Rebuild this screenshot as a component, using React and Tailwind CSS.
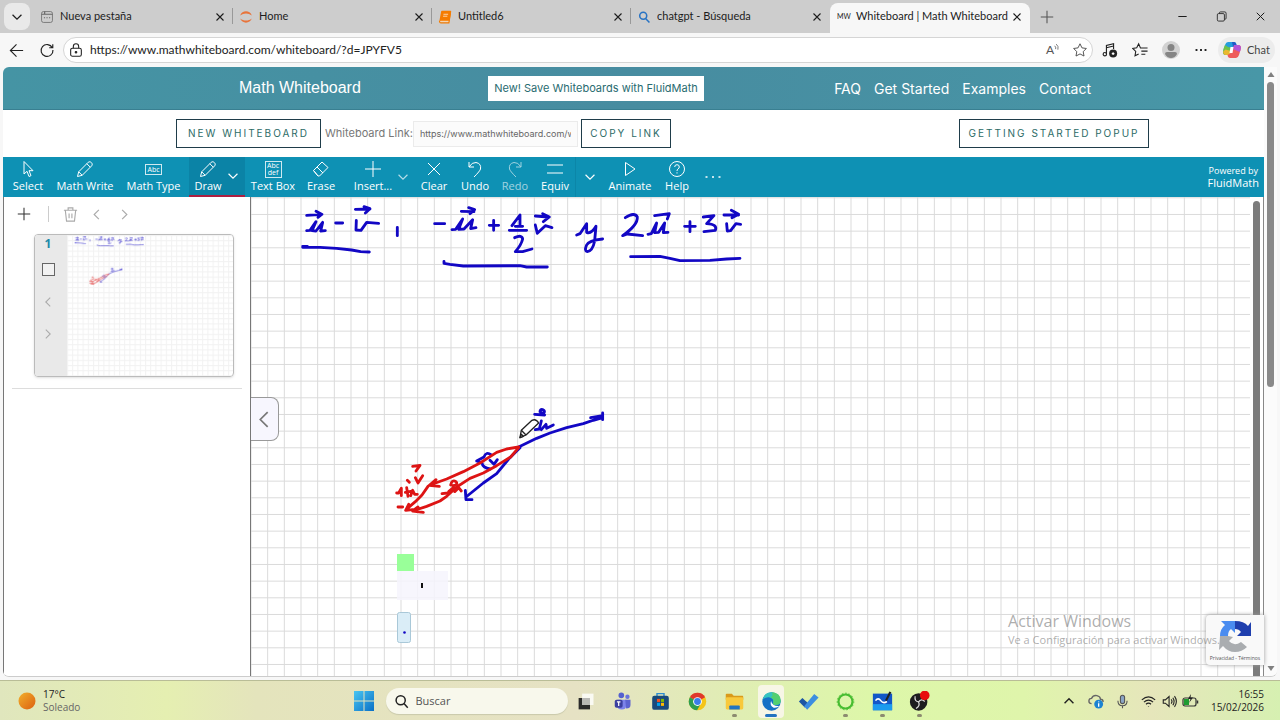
import React from "react";

const INK_BLUE = "#1207c4";
const INK_RED = "#dd1414";

function Glyph({ d, size = 18, width = 1, className = "", children }) {
  return (
    <svg
      width={size}
      height={size}
      viewBox="0 0 18 18"
      fill="none"
      stroke="currentColor"
      strokeWidth={width}
      className={className}
      aria-hidden="true"
    >
      {d && <path d={d} />}
      {children}
    </svg>
  );
}

const CLOSE = "M4.5 4.5 13.5 13.5 M13.5 4.5 4.5 13.5";
const LEFT = "M11.5 4 6.5 9 11.5 14";
const RIGHT = "M6.5 4 11.5 9 6.5 14";
const DOWN = "M4 6.5 9 11.5 14 6.5";
const PENCIL = "M1.5 16.5 2.7 11.8 12.2 2.3C14.2 .5 17.5 3.7 15.7 5.8L6.2 15.3ZM10.8 3.7 14.3 7.2M2.7 11.8 6.2 15.3";

/* ---------- Browser chrome ---------- */

const tabs = [
  {
    title: "Nueva pestaña",
    icon: (
      <Glyph size={14} className="text-[#666]">
        <rect x="2" y="2" width="14" height="14" rx="2.5" />
        <path d="M2 5.5H16M6 2V5.5M5 10h1.5M8.3 10h1.5M11.6 10h1.5" strokeWidth="1.5" />
      </Glyph>
    ),
  },
  {
    title: "Home",
    icon: (
      <Glyph size={14} className="text-[#e8743b]">
        <path d="M1.5 7C4 0 14 0 16.500 7 12 3.500 6 3.500 1.500 7ZM1.500 11C4 18 14 18 16.500 11 12 14.500 6 14.500 1.500 11Z" fill="currentColor" stroke="none" />
      </Glyph>
    ),
  },
  {
    title: "Untitled6",
    icon: (
      <svg width="14" height="14" viewBox="0 0 18 18" aria-hidden="true">
        <path d="M5 2H16L14 13H3Z" fill="#f57c00" stroke="#f57c00" strokeWidth="2" strokeLinejoin="round" />
        <path d="M3 14.500H14M7 5.500H13M6.500 8H12" stroke="#ffd9b0" strokeWidth="1.200" />
        <path d="M2 13.500Q1.500 16.500 4 16.500H14L16 4" fill="none" stroke="#f57c00" strokeWidth="1.500" />
      </svg>
    ),
  },
  {
    title: "chatgpt - Búsqueda",
    icon: (
      <Glyph size={14} width={2} className="text-[#2773c4]">
        <circle cx="8" cy="7.500" r="4.500" />
        <path d="M11 11 16 16" />
      </Glyph>
    ),
  },
];

function TabStrip() {
  return (
    <div className="flex h-[33px] shrink-0 items-stretch bg-[#cdcdcd] font-[Lato,sans-serif] text-[#1c1c1c]">
      <button aria-label="Tab actions" className="ml-1 mt-[3px] flex h-[27px] w-[26px] shrink-0 items-center justify-center rounded-lg bg-[#e9e9e9]">
        <Glyph d={DOWN} size={16} width={1.4} />
      </button>
      <div className="ml-1 flex min-w-0 flex-1">
        {tabs.map((t, i) => (
          <div key={t.title} className="relative flex w-[199px] items-center pl-[6px] pr-[6px]">
            {i < 3 && <span className="absolute right-0 top-2 h-4 w-px bg-[#999]" />}
            {t.icon}
            <span className="ml-[6px] min-w-0 flex-1 truncate text-[11px]">{t.title}</span>
            <button aria-label={"Close " + t.title}>
              <Glyph d={CLOSE} size={14} width={1.4} />
            </button>
          </div>
        ))}
        <div className="mt-[3px] flex w-[200px] items-center rounded-t-lg bg-[#f7f7f7] pb-[3px] pl-[7px] pr-[6px]">
          <span className="w-[13px] text-[7px]">MW</span>
          <span className="ml-[6px] min-w-0 flex-1 whitespace-nowrap text-[11px]">Whiteboard | Math Whiteboard</span>
          <button aria-label="Close Whiteboard">
            <Glyph d={CLOSE} size={14} width={1.4} />
          </button>
        </div>
        <button aria-label="New tab" className="ml-[9px] text-[#555]">
          <Glyph d="M9 2V16M2 9H16" size={16} width={1.200} />
        </button>
      </div>
      <div className="flex items-center gap-6 pr-3">
        <button aria-label="Minimize"><Glyph d="M4 9H14" size={15} width={1.200} /></button>
        <button aria-label="Restore">
          <Glyph size={15}>
            <rect x="4" y="5.500" width="8.500" height="9" rx="1.500" />
            <path d="M6.500 5.500V4.500Q6.500 3.500 8 3.500H13Q14.500 3.500 14.500 5V11Q14.500 12.500 12.500 12.500" />
          </Glyph>
        </button>
        <button aria-label="Close window"><Glyph d={CLOSE} size={15} width={1.200} /></button>
      </div>
    </div>
  );
}

function AddressBar() {
  return (
    <div className="flex h-[34px] shrink-0 items-center bg-[#f7f7f7] font-[Lato,sans-serif] text-[#222]">
      <button aria-label="Back" className="ml-2"><Glyph d="M9 2.500 2.500 9 9 15.500M2.500 9H16" size={17} width={1.200} /></button>
      <button aria-label="Refresh" className="ml-[14px]">
        <Glyph d="M15 6.500A6.700 6.700 0 1 0 15.700 9M15.500 2.500V6.500H11.500" size={16} width={1.300} />
      </button>
      <div className="ml-2 flex h-[26px] min-w-0 flex-1 items-center rounded-full border border-[#d5d5d5] bg-white pl-1 pr-1">
        <Glyph size={16} width={1.200}>
          <rect x="3" y="7" width="12" height="9" rx="2" />
          <path d="M6 7V5Q6 2 9 2T12 5V7" />
          <circle cx="9" cy="11.500" r=".9" fill="currentColor" />
        </Glyph>
        <input
          aria-label="Address"
          readOnly
          value="https://www.mathwhiteboard.com/whiteboard/?d=JPYFV5"
          className="ml-[6px] min-w-0 flex-1 bg-transparent text-[12px] outline-none"
        />
        <button aria-label="Read aloud" className="mr-1 flex text-[12px] text-[#555]">
          A
          <Glyph size={10} width={1.400} className="mt-[2px]" d="M1 5Q4 7 3 11M4 2Q9 6 7 12" />
        </button>
        <button aria-label="Add to favorites" className="ml-1 text-[#444]">
          <Glyph size={16} d="M9 2 11.200 6.600 16.200 7.300 12.600 10.800 13.500 15.800 9 13.400 4.500 15.800 5.400 10.800 1.800 7.300 6.800 6.600Z" />
        </button>
      </div>
      <div className="ml-[9px] flex items-center gap-[14px]">
        <button aria-label="Media">
          <Glyph size={16} width={1.300}>
            <path d="M5 13.500V4L13 2V8M5 6.500 13 4.500" />
            <circle cx="3.200" cy="13.700" r="1.900" />
            <circle cx="12.500" cy="13" r="4.500" fill="currentColor" stroke="none" />
            <path d="M11 13h3M12.500 11.500v3" stroke="white" />
          </Glyph>
        </button>
        <button aria-label="Favorites">
          <Glyph size={16} width={1.200} d="M12 6.700 9.500 6.600 7.500 2 5.300 6.500.8 7.200 4.200 10.600 3.400 15.500 7.500 13.400M10.500 6.800H17.500M10.500 10.300H17.500M10.500 13.800H15" />
        </button>
        <button aria-label="Profile">
          <svg width="18" height="18" viewBox="0 0 18 18" aria-hidden="true">
            <circle cx="9" cy="9" r="9" fill="#d2d2d2" />
            <circle cx="9" cy="6.500" r="3.500" fill="#858585" />
            <path d="M3 13Q3 11 5 11H13Q15 11 15 13Q13 17 9 17T3 13Z" fill="#858585" />
          </svg>
        </button>
        <button aria-label="Settings and more">
          <Glyph size={14} d="M2 9h2.400M7.800 9h2.400M13.600 9H16" width={2.400} />
        </button>
      </div>
      <button className="ml-[10px] mr-[5px] flex h-[26px] w-[57px] items-center gap-[5px] rounded-full bg-[#ececec] pl-1 text-[11px] text-[#444]">
        <svg width="20" height="20" viewBox="0 0 20 20" aria-hidden="true">
          <path d="M6 2H12Q14 2 14.500 5L15 7H11L8 15H4Q0 15 1.500 10L3 5Q4 2 6 2Z" fill="#249ddd" />
          <path d="M3 5Q1 9 1 12T4 15H8L10 8 6 7Z" fill="#6dc24b" />
          <path d="M3.500 9.500 1.200 11.500Q1 15 4 15H8L9 11Z" fill="#e9b92f" />
          <path d="M14 18H8Q6 18 5.500 15L9 13 12 5H16Q20 5 18.500 10L17 15Q16 18 14 18Z" fill="#ee5b5b" />
          <path d="M12 5H16Q20 5 18.500 10L17.800 12 11 9Z" fill="#b254d8" />
          <path d="M10 2H12Q14 2 14.500 5L12 5 11 7Z" fill="#2259c7" />
          <path d="M8.500 7H11.500L10.500 13H7.500Z" fill="#fff" />
        </svg>
        <span>Chat</span>
      </button>
    </div>
  );
}

/* ---------- Site header ---------- */

function SiteHeader() {
  return (
    <header className="flex h-[43px] shrink-0 items-center rounded-tl-md border-b border-[#397f91] bg-linear-to-r from-[#4594a4] via-[#478ca0] to-[#4897a7] text-white">
      <h1 className="ml-[236px] w-[125px] whitespace-nowrap font-['Liberation_Sans',sans-serif] text-[16px]">Math Whiteboard</h1>
      <a href="#save" className="ml-[124px] flex h-[25px] w-[216px] items-center justify-center whitespace-nowrap bg-white font-[Inter,sans-serif] text-[11px] text-[#286b70]">
        New! Save Whiteboards with FluidMath
      </a>
      <nav className="ml-auto mr-[173px] flex gap-[13px] whitespace-nowrap font-[Inter,sans-serif] text-[14px]">
        <a href="#faq">FAQ</a>
        <a href="#start">Get Started</a>
        <a href="#examples">Examples</a>
        <a href="#contact">Contact</a>
      </nav>
    </header>
  );
}

function LinkRow() {
  const box = "flex h-[29px] shrink-0 items-center justify-center whitespace-nowrap border border-[#1f3d4a] bg-white text-[10px] text-[#2c6b66] tracking-[2px]";
  return (
    <div className="flex h-[47px] shrink-0 items-center bg-white pl-[173px] pr-[115px] font-[Inter,sans-serif]">
      <button className={box + " w-[145px]"}>NEW WHITEBOARD</button>
      <label htmlFor="board-link" className="ml-1 w-[88px] whitespace-nowrap text-[11px] text-[#777]">Whiteboard Link:</label>
      <input
        id="board-link"
        readOnly
        value="https://www.mathwhiteboard.com/whiteboard/?d=JPYFV5"
        className="h-[26px] w-[165px] border border-[#ebebeb] bg-[#fbfbfb] px-[6px] text-[9px] text-[#666] outline-none"
      />
      <button className={box + " ml-[3px] w-[90px]"}>COPY LINK</button>
      <button className={box + " ml-auto w-[190px]"}>GETTING STARTED POPUP</button>
    </div>
  );
}

/* ---------- Whiteboard toolbar ---------- */

function Tool({ label, w, dim, children }) {
  return (
    <button className={"flex h-full flex-col items-center whitespace-nowrap pt-[3px] text-[11px] leading-4 " + w + (dim ? " opacity-60" : "")}>
      <span className="flex h-[18px] items-center">{children}</span>
      {label}
    </button>
  );
}

function Chevron({ w, label }) {
  return (
    <button aria-label={label} className={"flex h-full items-center justify-center " + w}>
      <Glyph d={DOWN} size={16} width={1.300} className="shrink-0" />
    </button>
  );
}

function AbcBox({ two }) {
  return (
    <span className={"flex w-[17px] flex-col items-center justify-center border border-white/80 text-[7px] leading-[7px] " + (two ? "h-[17px]" : "h-[11px]")}>
      <span>Abc</span>
      {two && <span>def</span>}
    </span>
  );
}

function Toolbar() {
  return (
    <div className="flex h-10 shrink-0 items-stretch bg-[#0e91b4] pl-px text-white">
      <Tool label="Select" w="w-12"><Glyph d="M5 1.500V14L8 11.300 10 16.500 12 15.600 10 10.700H14Z" /></Tool>
      <Tool label="Math Write" w="w-[66px]"><Glyph d={PENCIL} /></Tool>
      <Tool label="Math Type" w="w-[71px]"><AbcBox /></Tool>
      <div className="flex border-b-2 border-[#ad1f41] bg-[#0b83a6] pr-[6px]">
        <Tool label="Draw" w="w-[38px]"><Glyph d={PENCIL} /></Tool>
        <Chevron w="w-[12px]" label="Draw options" />
      </div>
      <Tool label="Text Box" w="w-14"><AbcBox two /></Tool>
      <Tool label="Erase" w="w-10"><Glyph d="M1.500 10.500 10 2 16 7.500 7.500 16H6ZM5 7 11 13M1.500 10.500 6 16" /></Tool>
      <Tool label="Insert..." w="w-12 ml-2"><Glyph d="M9 1V17M1 9H17" /></Tool>
      <Chevron w="w-[12px] opacity-70" label="Insert options" />
      <Tool label="Clear" w="w-[42px] ml-1"><Glyph d="M3 3 15 15M15 3 3 15" /></Tool>
      <Tool label="Undo" w="w-10"><Glyph d="M3 2V7H8M3 7Q6 2 10 2.500 15.500 3.500 14.500 9 14 11 8 17" /></Tool>
      <Tool label="Redo" w="w-10" dim><Glyph d="M15 2V7H10M15 7Q12 2 8 2.500 2.500 3.500 3.500 9 4 11 10 17" /></Tool>
      <Tool label="Equiv" w="w-10"><Glyph d="M1 5H17M1 13H17" /></Tool>
      <Chevron w="w-7 border-l border-[#0b86a8]" label="Equivalence options" />
      <Tool label="Animate" w="w-[54px]"><Glyph d="M4.500 2.500V15.500L14 9Z" /></Tool>
      <Tool label="Help" w="w-10">
        <Glyph>
          <circle cx="9" cy="9" r="7.500" />
          <path d="M6.700 7Q6.700 4.700 9 4.700T11.300 7Q11.300 8.200 10 9 9 9.600 9 11M9 12.300V13.500" />
        </Glyph>
      </Tool>
      <button aria-label="More" className="flex w-8 items-center justify-center">
        <Glyph d="M1.500 9h2M8 9h2M14.500 9h2" width={1.600} />
      </button>
      <div className="ml-auto flex flex-col items-center justify-center pr-[5px] leading-3">
        <span className="text-[9px]">Powered by</span>
        <span className="text-[11px]">FluidMath</span>
      </div>
    </div>
  );
}

/* ---------- Drawing ---------- */

function Grid({ id, step, x = 0, y = 0, color }) {
  return (
    <>
      <defs>
        <pattern id={id} width={step} height={step} x={x} y={y} patternUnits="userSpaceOnUse">
          <path d={`M0 .5H${step}M.5 0V${step}`} stroke={color} fill="none" />
        </pattern>
      </defs>
      <rect width="100%" height="100%" fill={`url(#${id})`} />
    </>
  );
}

function Ink({ weight = 8.5 }) {
  return (
    <g fill="none" strokeLinecap="round" strokeLinejoin="round" strokeWidth={weight} stroke={INK_BLUE}>
      <g transform="translate(39 -2) scale(.3333)">
        <path d="M50 61 96 58M78 49 95 58 84 67M50 107 60 106 78 80 66 107 78 108 98 82 92 108 106 107" />
        <path d="M137 84H158M196 43 240 42M222 35 240 41 226 54M199 76 198 105 213 106 230 82 266 85M322 97V122" />
        <path d="M38 154H52M38 157 90 157 140 160 185 165 212 170 238 171" />
        <path d="M434 86H464M486 104 497 103 518 72 506 103 522 102 548 74 542 101 558 98M514 49 552 50M536 38 554 44 540 56" />
        <path d="M598 91H626M611 76V106M666 92 690 60 690 94M676 94H698M658 106H710" />
        <path d="M674 128Q696 118 698 132 694 150 676 170L698 170 726 162" />
        <path d="M736 90 742 115 766 92 786 98M736 63 776 66M758 56 778 66 760 80" />
        <path d="M462 199V205L480 208 520 213 690 212 710 216H772" />
        <path d="M860 120 870 116 890 86 890 112Q904 118 918 94M918 94 914 138Q908 168 892 170 882 168 890 150 896 136 938 132" />
        <path d="M1006 68Q1034 50 1042 66 1044 90 998 122L1012 117 1058 122" />
        <path d="M1074 118 1084 116 1100 84 1094 113 1106 112 1124 84 1120 113 1134 112M1094 62 1138 56 1132 72" />
        <path d="M1184 94H1216M1200 80V110M1240 66 1272 62 1250 86Q1284 88 1276 106L1242 110" />
        <path d="M1310 86 1312 108 1322 107 1338 86 1352 88M1302 60 1346 60M1324 46 1346 58 1326 68" />
        <path d="M1022 185 1110 184 1140 190 1170 197 1260 196 1310 192 1350 190" />
      </g>
      <g transform="translate(129 198) scale(.3333)">
        <path d="M416 156 470 130 510 114 560 98 610 86 668 66M632 68 668 62M640 76 668 68M668 54V74" />
        <path d="M420 158 386 192 350 236 310 264 258 306M256 286 258 314 276 314" />
        <path d="M466 104 478 102 484 78M484 104 498 88 500 100 520 90M464 58 494 60M480 50Q480 42 488 44 498 48 490 56L480 50" />
        <path d="M334 180Q318 168 312 186L290 198 306 204Q308 218 330 222M330 196 342 208 352 194" />
        <g stroke={INK_RED}>
          <path d="M416 156 380 162 350 172 300 204 250 230 200 252 150 270M168 254 148 271 178 274" />
          <path d="M416 158 392 186 350 212 310 234 270 250 230 276 200 304 180 318 140 334 98 348M114 336 98 348 130 352" />
          <path d="M144 274 126 300 106 320 78 344M86 328 77 346 98 344" />
          <path d="M54 336H68M50 294 56 294 64 280V302M76 292 92 289M82 256 88 262M80 278 84 304M92 302 98 286 104 298H112M106 248 114 264 128 242" />
          <path d="M98 214 120 211 108 228M186 296 204 294M206 290 222 276 224 290 236 278 244 288M212 270Q216 252 228 260 236 270 218 272" />
        </g>
      </g>
    </g>
  );
}

/* ---------- Slide panel ---------- */

function SlidePanel() {
  return (
    <aside className="w-[248px] shrink-0 border-x border-[#777] bg-white text-[#aaa]">
      <div className="flex h-[34px] items-center pl-3">
        <button aria-label="Add slide" className="text-[#333]"><Glyph d="M9 2V16M2 9H16" size={16} width={1.200} /></button>
        <span className="ml-4 h-4 w-px bg-[#ccc]" />
        <button aria-label="Delete slide" className="ml-[13px]">
          <Glyph d="M2 4.500H16M6.500 4.500V2H11.500V4.500M3.500 4.500 4.800 16H13.200L14.500 4.500M7.500 8V13M10.500 8V13" width={1.200} size={17} />
        </button>
        <button aria-label="Previous slide" className="ml-[9px]"><Glyph d={LEFT} size={17} width={1.200} /></button>
        <button aria-label="Next slide" className="ml-[11px]"><Glyph d={RIGHT} size={17} width={1.200} /></button>
      </div>
      <div className="ml-[30px] mt-[3px] flex h-[143px] w-[200px] overflow-hidden rounded border border-[#bbb] shadow">
        <div className="flex w-8 shrink-0 flex-col items-center bg-[#e9e9e9] pr-[6px]">
          <span className="text-[12px] font-bold leading-[18px] text-[#1d8aa8]">1</span>
          <input type="checkbox" aria-label="Select slide 1" className="mt-[10px] size-[13px] appearance-none border border-[#666] bg-[#f2f2f2]" />
          <button aria-label="Move slide up" className="mt-[18px]"><Glyph d={LEFT} size={16} width={1.200} /></button>
          <button aria-label="Move slide down" className="mt-4"><Glyph d={RIGHT} size={16} width={1.200} /></button>
        </div>
        <svg className="h-full min-w-0 flex-1" aria-hidden="true">
          <Grid id="thumb-grid" step={5.200} color="#f2f2f2" />
          <g transform="scale(.156)" opacity=".65"><Ink weight={14} /></g>
        </svg>
      </div>
      <hr className="mx-2 mt-[11px] border-[#ddd]" />
    </aside>
  );
}

function Board() {
  return (
    <main className="relative min-w-0 flex-1 overflow-hidden border-r border-[#888] bg-white">
      <div className="absolute inset-y-0 left-0 right-[13px]">
        <svg className="h-full w-full" aria-hidden="true">
          <Grid id="board-grid" step={16.667} x={-0.500} y={0.300} color="#dadada" />
        </svg>
      </div>
      <svg className="absolute left-0 top-0 h-full w-full" role="img" aria-label="Vector sketch">
        <rect x="146" y="357" width="17" height="17" fill="#99ff99" />
        <rect x="146" y="374" width="51" height="29" fill="#f6f4fd" fillOpacity=".85" />
        <rect x="170" y="386" width="2" height="5" fill="#111" />
        <rect x="146.500" y="415.500" width="13" height="30" rx="2" fill="#daedf7" stroke="#a9c8d8" />
        <circle cx="153.500" cy="435.500" r="1.300" fill={INK_BLUE} />
        <Ink />
        <g transform="translate(129 198) scale(.3333)" stroke="#222" strokeWidth="4" fill="#fff" strokeLinejoin="round">
          <path d="M420 128 424 106 456 76Q468 70 476 84L438 120Z" />
          <path d="M424 106 438 120M420 128 424 118 430 124Z" />
        </g>
      </svg>
      <button aria-label="Collapse panel" className="absolute left-0 top-[200px] flex h-11 w-7 items-center justify-center rounded-r-lg border border-l-0 border-[#999] bg-[#f7f6fe] text-[#777]">
        <Glyph d="M12 2 5 9 12 16" size={19} width={1.600} />
      </button>
      <div className="absolute bottom-0 right-[3px] top-1 w-[7px] rounded-t-full bg-[#7c7c7c]" />
    </main>
  );
}

function Recaptcha() {
  return (
    <div className="absolute bottom-[11px] right-0 flex h-[50px] w-[58px] flex-col items-center rounded-l bg-[#f9f9f9] pt-1 shadow-[0_0_4px_#999]">
      <svg width="36" height="34" viewBox="0 0 36 34" aria-hidden="true">
        <path d="M18 2Q27 2 31 7L34 3V17H20L24 13Q22 10 18 10Z" fill="#1f3fae" />
        <path d="M3 17Q3 10 8 6L4 2H18V14L14 10Q11 12 11 17Z" fill="#4a8cf0" />
        <path d="M3 17H11L16 18 12 22Q17 28 24 23L30 28Q25 33 18 33 11 33 6 27L2 31Z" fill="#aaadb0" />
      </svg>
      <span className="mt-[2px] whitespace-nowrap text-[5px] leading-[6px] text-[#555]">Privacidad - Términos</span>
    </div>
  );
}

function PageScrollbar() {
  return (
    <div className="flex w-[13px] shrink-0 flex-col items-center bg-[#fbfbfb] pb-1 pt-1 text-[#808080]">
      <svg width="8" height="7" viewBox="0 0 8 7" aria-hidden="true"><path d="M4 1 7.500 6H.5Z" fill="currentColor" /></svg>
      <div className="mt-1 h-[305px] w-[7px] rounded-full bg-[#898989]" />
      <svg className="mt-auto" width="8" height="7" viewBox="0 0 8 7" aria-hidden="true"><path d="M4 6 7.500 1H.5Z" fill="currentColor" /></svg>
    </div>
  );
}

/* ---------- Taskbar ---------- */

const apps = [
  { name: "Task view", art: <><rect x="3" y="8" width="13" height="13" fill="#2b2b2b" /><rect x="7" y="3" width="13" height="13" fill="#fff" fillOpacity=".8" /><rect x="7" y="8" width="9" height="8" fill="#b9b9b5" /></> },
  { name: "Teams", art: <><circle cx="9.500" cy="5" r="3.200" fill="#5560cf" /><circle cx="16.500" cy="6.500" r="2.500" fill="#6a74dd" /><path d="M5 10H15V17Q15 21 10 21T5 17Z" fill="#7c83ea" /><path d="M14 10H20V16Q20 20 15 20Z" fill="#5c63d0" /><rect x="2" y="10" width="9" height="9" rx="2" fill="#3b3f9f" /><path d="M4.500 12.500H8.500M6.500 12.500V17" stroke="#fff" strokeWidth="1.400" /></> },
  { name: "Store", art: <><path d="M8 6V3H16V6" fill="none" stroke="#2b8bd0" strokeWidth="1.600" /><rect x="2.500" y="5.500" width="19" height="16" rx="2.500" fill="#194a7c" /><path d="M8 9H11.500V12.500H8Z" fill="#f25022" /><path d="M12.500 9H16V12.500H12.500Z" fill="#7fba00" /><path d="M8 13.500H11.500V17H8Z" fill="#00a4ef" /><path d="M12.500 13.500H16V17H12.500Z" fill="#ffb900" /></> },
  { name: "Chrome", art: <><circle cx="12" cy="12" r="10" fill="#f5c518" /><path d="M12 12 3.300 7A10 10 0 0 1 20.700 7Z" fill="#e0382c" /><path d="M12 12 3.300 7A10 10 0 0 0 11.500 22L16 14Z" fill="#2e9e4f" /><circle cx="12" cy="12" r="5" fill="#fff" /><circle cx="12" cy="12" r="3.900" fill="#3b7de9" /></> },
  { name: "Explorer", run: true, art: <><path d="M2 4Q2 3 3 3H9L11 5.500H21Q22 5.500 22 7V10H2Z" fill="#d99a1b" /><rect x="2" y="7" width="20" height="14" rx="1.500" fill="#f8c93c" /><path d="M6 21V17.500Q6 16.500 7 16.500H17Q18 16.500 18 17.500V21Z" fill="#2374c0" /></> },
  { name: "Edge", active: true, art: <><circle cx="12" cy="12" r="10.500" fill="#1671c5" /><path d="M1.700 10Q4 1.500 12 1.500T22.500 11Q22 16 17 16 13 16 14 13 15 8 9 7 4 7 1.700 10Z" fill="#35c4c0" /><path d="M12 1.500Q22.500 2 22.500 11 22 16 17 16 13 16 14 13 15 9 11 7.500 15 5 12 1.500Z" fill="#53cf70" /><path d="M11.500 11.500Q9.500 17 14.500 19 18.500 19.500 21 17 17 17.500 14.500 16 12 14.500 11.500 11.500Z" fill="#fff" /></> },
  { name: "To Do", art: <><path d="M1 12 5 8 11 13.500 8 19Z" fill="#1d57a3" /><path d="M7 17.500 18.500 3.500 23.500 7.500 10.500 21.500Z" fill="#3c8ee0" /></> },
  { name: "Camtasia", run: true, art: <><circle cx="12" cy="12" r="8" fill="none" stroke="#48bd31" strokeWidth="2.500" /><circle cx="12" cy="12" r="9.500" fill="none" stroke="#48bd31" strokeDasharray="2 2" /></> },
  { name: "Whiteboard", run: true, art: <><rect x="1" y="3" width="22" height="19" fill="#1257c8" /><path d="M1 15H23V22H1Z" fill="#1b9bef" /><path d="M4 11Q7 7 10 11T17 12" fill="none" stroke="#fff" strokeWidth="1.800" /><path d="M16 11 21 1" stroke="#222" strokeWidth="2.500" /></> },
  { name: "OBS", run: true, art: <><circle cx="11" cy="12.500" r="10" fill="#1d1d1f" /><path d="M11 12.500Q6 12 7 6M11 12.500Q14 8 18 12M11 12.500Q13 17 8 20" fill="none" stroke="#ddd" strokeWidth="1.400" /><circle cx="18" cy="5" r="5.500" fill="#e80d0d" /></> },
];

function Taskbar() {
  return (
    <footer className="grid h-10 shrink-0 grid-cols-[1fr_auto_1fr] items-center border-t border-[#b9bd97] bg-[linear-gradient(90deg,#e0e6bd_0%,#e5efb1_13%,#e4e4bc_20%,#e6e2c4_45%,#e0eeb3_58%,#ddf7a9_68%,#dff5ab_80%,#e6e6bb_90%,#d6f0b1_100%)]">
      <div className="flex items-center gap-[7px] pl-[18px] text-[10px] leading-[13px]">
        <svg width="18" height="18" viewBox="0 0 18 18" aria-hidden="true">
          <defs><linearGradient id="sun" x1="0" y1="0" x2="1" y2="1"><stop stopColor="#f2b02c" /><stop offset="1" stopColor="#dc5f10" /></linearGradient></defs>
          <circle cx="9" cy="9" r="8.500" fill="url(#sun)" />
        </svg>
        <div>
          <div className="text-[#222]">17°C</div>
          <div className="text-[#666]">Soleado</div>
        </div>
      </div>
      <div className="flex items-center">
        <button aria-label="Start" className="flex w-[43px] justify-center">
          <svg width="20" height="20" viewBox="0 0 20 20" aria-hidden="true">
            <defs><linearGradient id="win" x1="0" y1="0" x2="1" y2="1"><stop stopColor="#48c6f2" /><stop offset="1" stopColor="#0a6fc6" /></linearGradient></defs>
            <path d="M0 0H9.500V9.500H0ZM10.500 0H20V9.500H10.500ZM0 10.500H9.500V20H0ZM10.500 10.500H20V20H10.500Z" fill="url(#win)" />
          </svg>
        </button>
        <label className="flex h-[26px] w-[182px] items-center rounded-full bg-[#f8f8ec] pl-2 text-[11px] shadow-[0_1px_1px_#c9c9ab]">
          <Glyph size={15} width={1.800} className="shrink-0 text-[#222]">
            <circle cx="8" cy="7.500" r="5.500" />
            <path d="M12 11.500 16.500 16.500" />
          </Glyph>
          <input aria-label="Buscar" placeholder="Buscar" className="ml-[7px] w-full min-w-0 bg-transparent outline-none placeholder:text-[#555]" />
        </label>
        {apps.map((a) => (
          <button key={a.name} aria-label={a.name} className="relative flex h-10 w-[37px] items-center justify-center">
            <span className={"flex h-[33px] w-[26px] items-center justify-center rounded " + (a.active ? "bg-[#f7f6e6]" : "")}>
              <svg width="21" height="21" viewBox="0 0 24 24" aria-hidden="true">{a.art}</svg>
            </span>
            {(a.run || a.active) && (
              <span className={"absolute bottom-[4px] h-[3px] rounded-full " + (a.active ? "w-[12px] bg-[#2373c0]" : "w-[5px] bg-[#8c8b70]")} />
            )}
          </button>
        ))}
      </div>
      <div className="flex items-center justify-end pr-4 text-[#222]">
        <Glyph d="M4 11.500 9 6.500 14 11.500" size={16} width={1.600} />
        <svg className="ml-[11px]" width="16" height="16" viewBox="0 0 18 18" aria-hidden="true">
          <path d="M4 12Q1 12 1 9T4 6Q6 2 10 3 14 4 14 7 17 7 17 10" fill="none" stroke="#666" strokeWidth="1.500" />
          <circle cx="12" cy="12.500" r="5" fill="#1b83d2" />
          <path d="M12 9.500V10.500M12 11.500V15.500" stroke="#fff" strokeWidth="1.500" />
        </svg>
        <Glyph size={15} width={1.300} className="ml-[11px] text-[#555]">
          <rect x="6.500" y="1.500" width="5" height="10" rx="2.500" fill="#8aa4c4" />
          <path d="M3.500 8Q3.500 14 9 14T14.500 8M9 14V17" />
        </Glyph>
        <Glyph size={15} width={1.400} className="ml-[11px]" d="M1 7Q9 0 17 7M3.500 9.800Q9 4.800 14.500 9.800M6 12.300Q9 9.500 12 12.300M9 14.500V15" />
        <Glyph size={15} width={1.300} className="ml-[6px]" d="M1.500 7V11H4L8.500 15V3L4 7ZM11 6.500Q13 9 11 11.500M13 4.500Q16 9 13 13.500M15 2.500Q19.500 9 15 15.500" />
        <svg className="ml-[5px]" width="17" height="14" viewBox="0 0 17 14" aria-hidden="true">
          <rect x="1" y="4" width="13" height="8" rx="2" fill="none" stroke="#333" strokeWidth="1.200" />
          <rect x="2" y="5" width="5" height="6" fill="#1f9b31" />
          <path d="M15.500 6.500V9.500" stroke="#333" strokeWidth="1.500" />
          <path d="M9 0 6 5H8.500L7 9 11 3.500H8.500Z" fill="#222" />
        </svg>
        <div className="ml-3 whitespace-nowrap text-right text-[10px] leading-[13px]">
          <div>16:55</div>
          <div>15/02/2026</div>
        </div>
      </div>
    </footer>
  );
}

export default function App() {
  return (
    <div className="flex h-screen flex-col overflow-hidden bg-[#f7f7f7] font-['Open_Sans','Noto_Sans',sans-serif]">
      <TabStrip />
      <AddressBar />
      <div className="mb-[3px] ml-[3px] mr-[3px] flex min-h-0 flex-1 overflow-hidden rounded-b-md border-b border-[#ccc]">
        <div className="relative flex min-w-0 flex-1 flex-col">
          <SiteHeader />
          <LinkRow />
          <Toolbar />
          <div className="flex min-h-0 flex-1">
            <SlidePanel />
            <Board />
          </div>
          <Recaptcha />
          <div className="pointer-events-none absolute bottom-[27px] right-[44px] whitespace-nowrap text-[#777]/60">
            <div className="text-[16px] leading-5">Activar Windows</div>
            <div className="text-[11px] leading-[18px]">Ve a Configuración para activar Windows.</div>
          </div>
        </div>
        <PageScrollbar />
      </div>
      <Taskbar />
    </div>
  );
}
